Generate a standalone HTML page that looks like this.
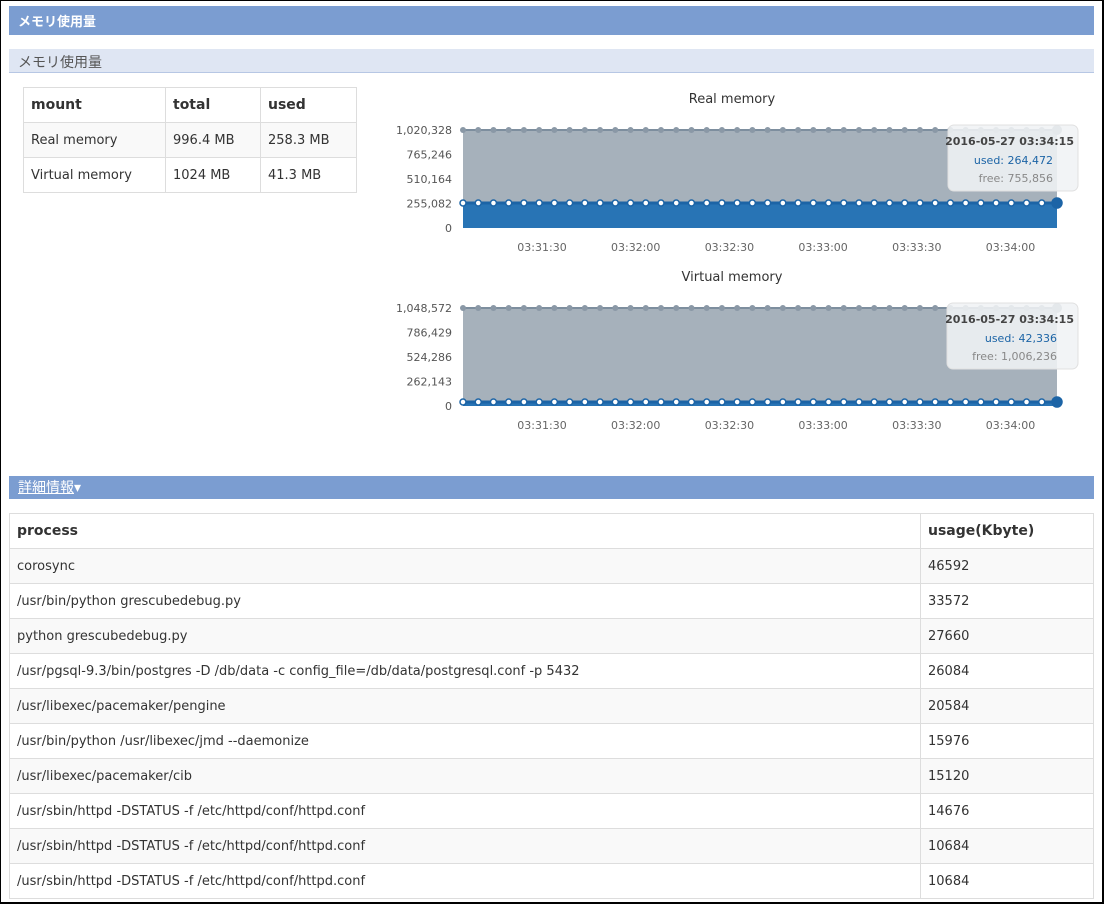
<!DOCTYPE html>
<html><head><meta charset="utf-8"><style>
*{box-sizing:border-box;margin:0;padding:0}
body{width:1104px;height:904px;background:#fff;font-family:"DejaVu Sans","Noto Sans CJK JP",sans-serif;color:#333;position:relative;overflow:hidden}
.frame{position:absolute;left:0;top:0;width:1104px;height:904px;border:1px solid #000;border-bottom-width:2px;border-right-width:2px;pointer-events:none}
.hdr{position:absolute;left:9px;top:6px;width:1085px;height:29px;background:#7b9dd1;color:#fff;font-weight:bold;font-size:13px;line-height:29px;padding-left:9px;font-family:"Noto Sans CJK JP",sans-serif}
.sub{position:absolute;left:9px;top:49px;width:1085px;height:24px;background:#dfe6f3;border-bottom:1px solid #b7c7e4;color:#555;font-size:14px;line-height:26px;padding-left:9px;font-family:"Noto Sans CJK JP",sans-serif}
table{border-collapse:collapse;position:absolute;font-size:13px}
td,th{border:1px solid #ddd;padding:0 7px;text-align:left;height:35px}
th{font-weight:bold;font-size:14px;color:#333}
.t1{left:23px;top:87px;width:334px}
.sh{background:#f9f9f9}
.det{position:absolute;left:9px;top:476px;width:1085px;height:23px;background:#7b9dd1;color:#fff;font-size:14px;line-height:23px;padding-left:9px;font-family:"Noto Sans CJK JP",sans-serif}
.det u{color:#fff}
.t2{left:9px;top:513px;width:1085px}
svg text{font-family:"DejaVu Sans",sans-serif}
</style></head><body>
<div class="hdr">メモリ使用量</div>
<div class="sub">メモリ使用量</div>
<table class="t1">
<tr><th style="width:142px">mount</th><th style="width:95px">total</th><th>used</th></tr>
<tr class="sh"><td>Real memory</td><td>996.4 MB</td><td>258.3 MB</td></tr>
<tr><td>Virtual memory</td><td>1024 MB</td><td>41.3 MB</td></tr>
</table>
<svg id="ch" style="position:absolute;left:0;top:0" width="1104" height="470"></svg>
<div class="det"><u>詳細情報</u>▾</div>
<table class="t2">
<tr><th>process</th><th style="width:173px">usage(Kbyte)</th></tr>
<tr class="sh"><td>corosync</td><td>46592</td></tr>
<tr><td>/usr/bin/python grescubedebug.py</td><td>33572</td></tr>
<tr class="sh"><td>python grescubedebug.py</td><td>27660</td></tr>
<tr><td>/usr/pgsql-9.3/bin/postgres -D /db/data -c config_file=/db/data/postgresql.conf -p 5432</td><td>26084</td></tr>
<tr class="sh"><td>/usr/libexec/pacemaker/pengine</td><td>20584</td></tr>
<tr><td>/usr/bin/python /usr/libexec/jmd --daemonize</td><td>15976</td></tr>
<tr class="sh"><td>/usr/libexec/pacemaker/cib</td><td>15120</td></tr>
<tr><td>/usr/sbin/httpd -DSTATUS -f /etc/httpd/conf/httpd.conf</td><td>14676</td></tr>
<tr class="sh"><td>/usr/sbin/httpd -DSTATUS -f /etc/httpd/conf/httpd.conf</td><td>10684</td></tr>
<tr><td>/usr/sbin/httpd -DSTATUS -f /etc/httpd/conf/httpd.conf</td><td>10684</td></tr>
</table>
<div class="frame"></div>
<script>
var s='';
function chart(title,ty,top,zero,used,labels,tip){
 s+='<text x="732" y="'+ty+'" font-size="13" fill="#333" text-anchor="middle">'+title+'</text>';
 var x0=463,x1=1057;
 s+='<rect x="'+x0+'" y="'+top+'" width="'+(x1-x0)+'" height="'+(zero-top)+'" fill="#a6b1bb"/>';
 s+='<rect x="'+x0+'" y="'+used+'" width="'+(x1-x0)+'" height="'+(zero-used)+'" fill="#2874b5"/>';
 s+='<line x1="'+x0+'" y1="'+top+'" x2="'+x1+'" y2="'+top+'" stroke="#7d8e9e" stroke-width="2"/>';
 s+='<line x1="'+x0+'" y1="'+used+'" x2="'+x1+'" y2="'+used+'" stroke="#1c64a6" stroke-width="3"/>';
 var ys=[top,top+(zero-top)/4,top+(zero-top)/2,top+3*(zero-top)/4,zero];
 for(var i=0;i<5;i++)s+='<text x="452" y="'+(ys[i]+4)+'" font-size="11" fill="#555" text-anchor="end">'+labels[i]+'</text>';
 var n=40;
 for(var i=0;i<n;i++){var x=x0+i*(x1-x0)/(n-1);
  var r=(i==n-1)?5:3;
  s+='<circle cx="'+x+'" cy="'+top+'" r="'+r+'" fill="#8a98a6"/>';
  s+='<circle cx="'+x+'" cy="'+used+'" r="'+r+'" fill="#fff" stroke="#1c64a6" stroke-width="1.5"/>';
 }
 s+='<circle cx="1057" cy="'+used+'" r="5" fill="#1c64a6"/>';
 var tl=['03:31:30','03:32:00','03:32:30','03:33:00','03:33:30','03:34:00'];
 for(var i=0;i<6;i++)s+='<text x="'+(542+i*93.7)+'" y="'+(zero+23)+'" font-size="11" fill="#666" text-anchor="middle">'+tl[i]+'</text>';
 var t0=top-5;
 s+='<rect x="'+tip[0]+'" y="'+t0+'" width="'+(1078-tip[0])+'" height="66" rx="6" fill="rgba(240,242,245,0.88)" stroke="#e0e0e0"/>';
 s+='<text x="1074" y="'+(t0+20)+'" font-size="11" font-weight="bold" fill="#444" text-anchor="end">2016-05-27 03:34:15</text>';
 s+='<text x="'+tip[1]+'" y="'+(t0+39)+'" font-size="11" fill="#1c64a6" text-anchor="end">used: '+tip[2]+'</text>';
 s+='<text x="'+tip[1]+'" y="'+(t0+57)+'" font-size="11" fill="#888" text-anchor="end">free: '+tip[3]+'</text>';
}
chart('Real memory',103,130,228,203,['1,020,328','765,246','510,164','255,082','0'],[948,1053,'264,472','755,856']);
chart('Virtual memory',281,308,406,402,['1,048,572','786,429','524,286','262,143','0'],[947,1057,'42,336','1,006,236']);
document.getElementById('ch').innerHTML=s;
</script>
</body></html>
